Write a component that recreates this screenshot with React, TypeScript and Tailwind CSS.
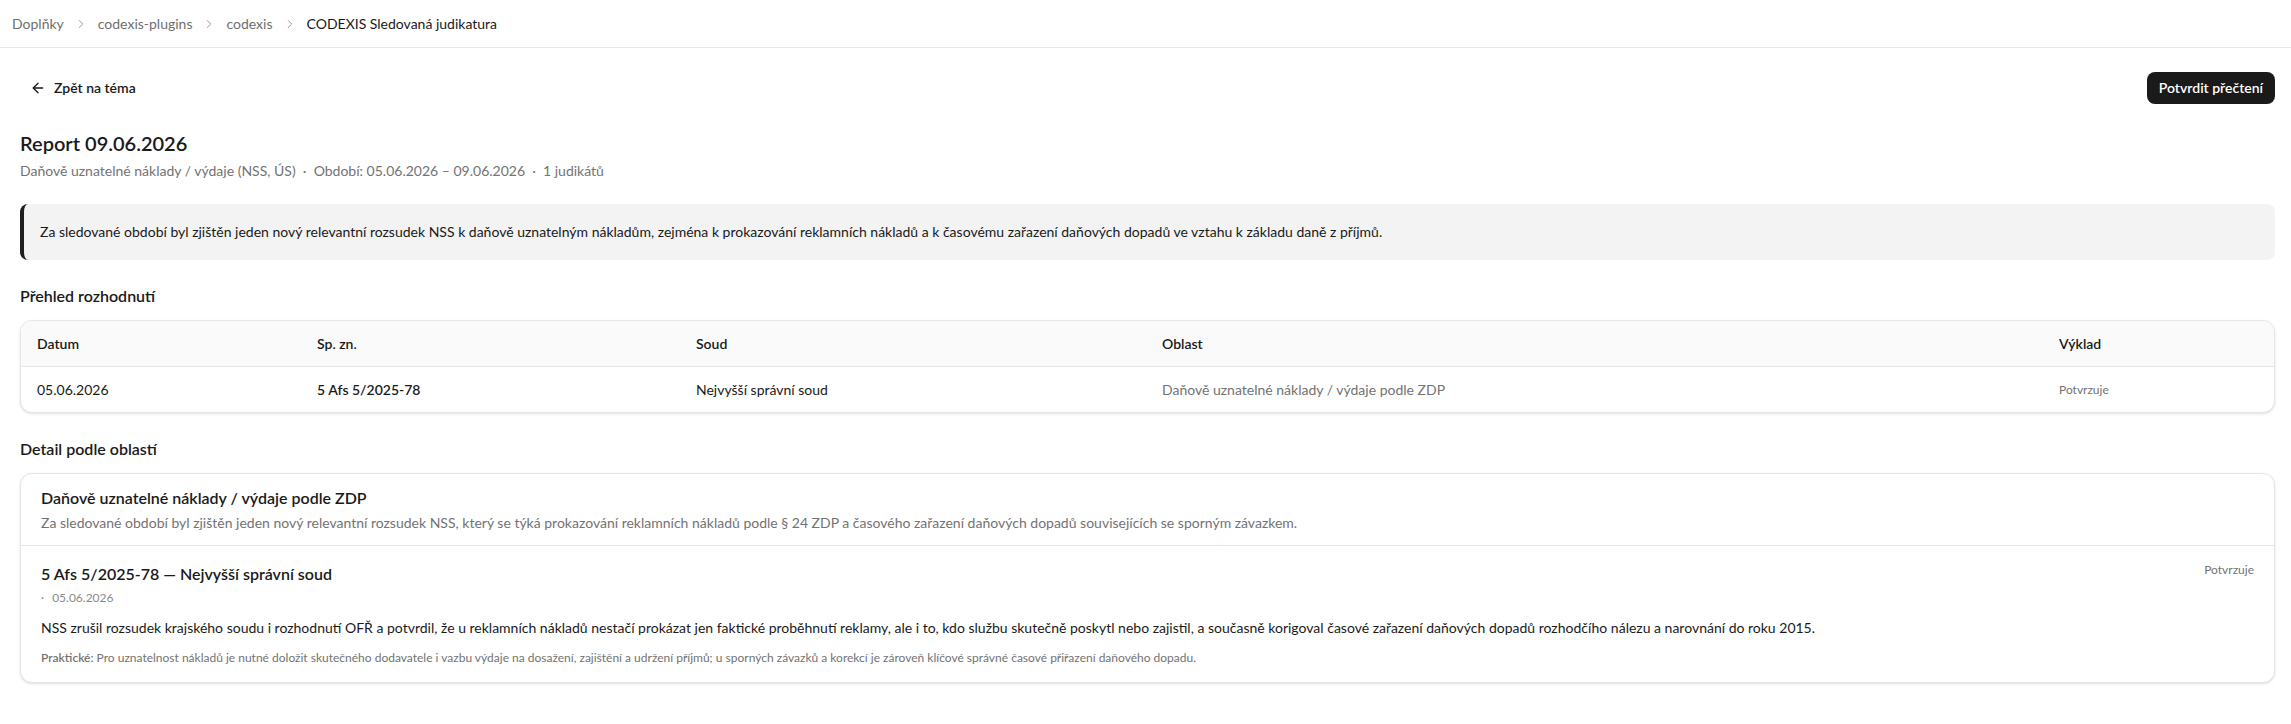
import { ArrowLeft, ChevronRight } from "lucide-react";

const crumbs = ["Doplňky", "codexis-plugins", "codexis", "CODEXIS Sledovaná judikatura"];

interface Decision {
  date: string;
  caseNo: string;
  court: string;
  area: string;
  verdict: string;
}

const decisions: Decision[] = [
  {
    date: "05.06.2026",
    caseNo: "5 Afs 5/2025-78",
    court: "Nejvyšší správní soud",
    area: "Daňově uznatelné náklady / výdaje podle ZDP",
    verdict: "Potvrzuje",
  },
];

const cols = "grid grid-cols-[280px_379px_466px_897px_1fr]";

function Breadcrumbs() {
  return (
    <nav className="flex h-12 items-center gap-2.5 border-b border-[#e8e8e8] px-3 text-sm">
      {crumbs.map((c, i) => (
        <div key={c} className="flex items-center gap-2.5">
          {i > 0 && <ChevronRight size={14} strokeWidth={1.5} className="text-[#8a8a8a]" />}
          <span className={i === crumbs.length - 1 ? "text-[#1a1a1a]" : "text-[#6f6f6f]"}>{c}</span>
        </div>
      ))}
    </nav>
  );
}

function DecisionTable() {
  return (
    <div className="mt-3 overflow-hidden rounded-xl border border-[#e6e6e6] bg-white text-sm shadow-sm">
      <div className={`${cols} bg-[#fafafa] px-4 py-[12.5px] font-semibold text-[#1a1a1a]`}>
        <span>Datum</span>
        <span>Sp. zn.</span>
        <span>Soud</span>
        <span>Oblast</span>
        <span>Výklad</span>
      </div>
      {decisions.map((d) => (
        <div
          key={d.caseNo}
          className={`${cols} items-center border-t border-[#e6e6e6] px-4 py-[12.5px] text-[#1a1a1a]`}
        >
          <span>{d.date}</span>
          <span className="font-semibold">{d.caseNo}</span>
          <span>{d.court}</span>
          <span className="text-[#737373]">{d.area}</span>
          <span className="text-xs text-[#737373]">{d.verdict}</span>
        </div>
      ))}
    </div>
  );
}

function AreaDetail() {
  return (
    <div className="mt-3 overflow-hidden rounded-xl border border-[#e6e6e6] bg-white shadow-sm">
      <div className="px-5 py-3">
        <h3 className="text-base font-semibold text-[#1a1a1a]">Daňově uznatelné náklady / výdaje podle ZDP</h3>
        <p className="mt-[3px] text-sm text-[#737373]">
          Za sledované období byl zjištěn jeden nový relevantní rozsudek NSS, který se týká prokazování reklamních
          nákladů podle § 24 ZDP a časového zařazení daňových dopadů souvisejících se sporným závazkem.
        </p>
      </div>
      <div className="border-t border-[#e6e6e6] px-5 pt-4 pb-4">
        <div className="flex items-start justify-between">
          <h4 className="text-base font-semibold text-[#1a1a1a]">5 Afs 5/2025-78 — Nejvyšší správní soud</h4>
          <span className="text-xs text-[#737373]">Potvrzuje</span>
        </div>
        <div className="mt-1 flex items-center gap-2 text-xs text-[#8a8a8a]">
          <span>·</span>
          <span>05.06.2026</span>
        </div>
        <p className="mt-3 text-sm text-[#1a1a1a]">
          NSS zrušil rozsudek krajského soudu i rozhodnutí OFŘ a potvrdil, že u reklamních nákladů nestačí prokázat jen
          faktické proběhnutí reklamy, ale i to, kdo službu skutečně poskytl nebo zajistil, a současně korigoval časové
          zařazení daňových dopadů rozhodčího nálezu a narovnání do roku 2015.
        </p>
        <p className="mt-3 text-xs text-[#737373]">
          <span className="font-semibold">Praktické:</span> Pro uznatelnost nákladů je nutné doložit skutečného
          dodavatele i vazbu výdaje na dosažení, zajištění a udržení příjmů; u sporných závazků a korekcí je zároveň
          klíčové správné časové přiřazení daňového dopadu.
        </p>
      </div>
    </div>
  );
}

export default function App() {
  return (
    <div className="min-h-screen bg-white font-['Segoe_UI','Lato','Open_Sans',sans-serif] text-[#1a1a1a]">
      <Breadcrumbs />
      <main className="pt-6 pr-4 pl-5">
        <div className="flex items-center justify-between">
          <button className="flex h-8 items-center gap-2 rounded-md px-2.5 text-sm font-semibold text-[#1a1a1a]">
            <ArrowLeft size={16} strokeWidth={2} />
            Zpět na téma
          </button>
          <button className="h-8 rounded-lg bg-[#1a1a1a] px-3 text-sm font-semibold text-white">
            Potvrdit přečtení
          </button>
        </div>

        <h1 className="mt-[25px] text-xl font-semibold">Report 09.06.2026</h1>
        <p className="mt-1 text-sm text-[#737373]">
          Daňově uznatelné náklady / výdaje (NSS, ÚS)&nbsp; · &nbsp;Období: 05.06.2026 – 09.06.2026&nbsp; · &nbsp;1 judikátů
        </p>

        <div className="mt-[23px] rounded-lg border-l-4 border-[#1f1f1f] bg-[#f3f3f3] py-[18px] pr-4 pl-4 text-sm text-[#1a1a1a]">
          Za sledované období byl zjištěn jeden nový relevantní rozsudek NSS k daňově uznatelným nákladům, zejména k
          prokazování reklamních nákladů a k časovému zařazení daňových dopadů ve vztahu k základu daně z příjmů.
        </div>

        <h2 className="mt-6 text-base font-semibold">Přehled rozhodnutí</h2>
        <DecisionTable />

        <h2 className="mt-6 text-base font-semibold">Detail podle oblastí</h2>
        <AreaDetail />
      </main>
    </div>
  );
}
